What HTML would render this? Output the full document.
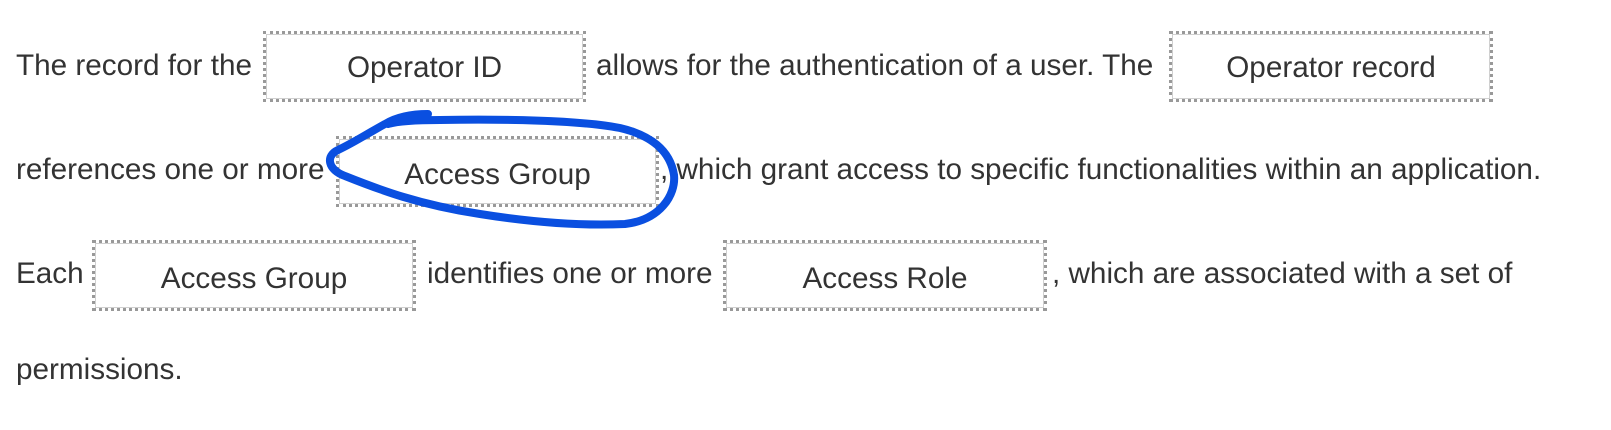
<!DOCTYPE html>
<html><head><meta charset="utf-8"><style>
html,body{margin:0;padding:0;background:#fff;width:1611px;height:430px;overflow:hidden;position:relative;font-family:"Liberation Sans",Arial,sans-serif;color:#333;font-size:29.7px}
.t{position:absolute;white-space:nowrap;line-height:32px}
.b{position:absolute;width:317px;height:65px;border:3px dotted #999;box-shadow:inset 0 0 0 1px #d0d0d0;background:#fff;text-align:center;line-height:68px;box-sizing:content-box}
</style></head><body>
<div class="t" style="left:16px;top:50px">The record for the</div>
<div class="b" style="left:263px;top:31px;width:317px">Operator ID</div>
<div class="t" style="left:596px;top:50px">allows for the authentication of a user. The</div>
<div class="b" style="left:1169px;top:31px;width:318px">Operator record</div>
<div class="t" style="left:16px;top:154px">references one or more</div>
<div class="b" style="left:336px;top:136px;width:317px;line-height:72px">Access Group</div>
<div class="t" style="left:660px;top:154px">, which grant access to specific functionalities within an application.</div>
<div class="t" style="left:16px;top:258px">Each</div>
<div class="b" style="left:92px;top:240px;width:318px;line-height:72px">Access Group</div>
<div class="t" style="left:427px;top:258px">identifies one or more</div>
<div class="b" style="left:723px;top:240px;width:318px;line-height:72px">Access Role</div>
<div class="t" style="left:1052px;top:258px">, which are associated with a set of</div>
<div class="t" style="left:16px;top:354px">permissions.</div>
<svg style="position:absolute;left:0;top:0" width="1611" height="430"><path d="M428,114 C410,114 395,118 385,124 C370,132 355,142 338,150 C325,156 328,170 345,176 C380,190 420,205 480,214 C530,222 580,226 625,224 C660,220 676,195 674,175 C670,150 650,135 620,128 C580,120 500,119 440,120 C410,120 395,122 388,124" fill="none" stroke="#0a4fe0" stroke-width="8" stroke-linecap="round" stroke-linejoin="round"/></svg>
</body></html>
